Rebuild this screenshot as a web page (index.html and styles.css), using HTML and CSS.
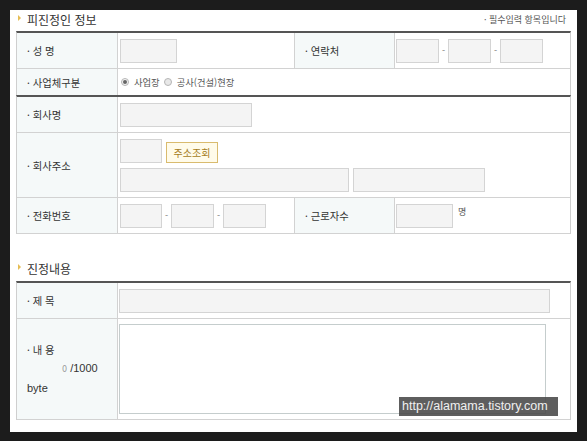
FILE: index.html
```html
<!DOCTYPE html>
<html lang="ko">
<head>
<meta charset="utf-8">
<title>피진정인 정보</title>
<link rel="stylesheet" href="styles.css">
</head>
<body>
<div class="frame">
  <div class="sec-head">
    <h2 class="sec-title">피진정인 정보</h2>
    <span class="note">· 필수입력 항목입니다</span>
  </div>
  <div class="tbl">
    <div class="row cols4 h36">
      <div class="th">· 성 명</div>
      <div class="td"><span class="inp w57"></span></div>
      <div class="th">· 연락처</div>
      <div class="td tight"><span class="inp w43"></span><span class="dash">-</span><span class="inp w43"></span><span class="dash">-</span><span class="inp w43"></span></div>
    </div>
    <div class="row cols2 h26 nob">
      <div class="th">· 사업체구분</div>
      <div class="td radios">
        <span class="radio on"></span><span class="rlabel">사업장</span>
        <span class="radio"></span><span class="rlabel">공사(건설)현장</span>
      </div>
    </div>
  </div>
  <div class="tbl">
    <div class="row cols2 h36">
      <div class="th">· 회사명</div>
      <div class="td"><span class="inp w132"></span></div>
    </div>
    <div class="row cols2 h65">
      <div class="th">· 회사주소</div>
      <div class="td stack">
        <div class="line bottom"><span class="inp w42"></span><span class="btn">주소조회</span></div>
        <div class="line"><span class="inp w229"></span><span class="inp w132"></span></div>
      </div>
    </div>
    <div class="row cols4 h36">
      <div class="th">· 전화번호</div>
      <div class="td"><span class="inp w42"></span><span class="dash">-</span><span class="inp w43"></span><span class="dash">-</span><span class="inp w43"></span></div>
      <div class="th">· 근로자수</div>
      <div class="td tight"><span class="inp w57"></span><span class="unit">명</span></div>
    </div>
  </div>

  <div class="sec-head second">
    <h2 class="sec-title">진정내용</h2>
  </div>
  <div class="tbl">
    <div class="row cols2 h36">
      <div class="th">· 제 목</div>
      <div class="td tight"><span class="inp w431"></span></div>
    </div>
    <div class="row cols2 h101">
      <div class="th multi">
        <span>· 내 용</span>
        <span class="count"><span class="zero">0</span> /1000</span>
        <span class="byte">byte</span>
      </div>
      <div class="td tight"><span class="area"></span></div>
    </div>
  </div>

  <div class="watermark">http://alamama.tistory.com</div>
</div>
</body>
</html>
```
FILE: styles.css
```css
* { box-sizing: border-box; margin: 0; padding: 0; }
html, body { background: #1c1c1c; }
body {
  margin: 0;
  width: 587px;
  height: 441px;
  overflow: hidden;
  font-family: "Noto Sans CJK KR", "Noto Sans", sans-serif;
  color: #333;
}
.frame {
  position: relative;
  margin: 10px 0 0 10px;
  width: 567px;
  height: 422px;
  background: #fff;
  padding: 0 6px;
}
.sec-head {
  height: 21px;
  display: flex;
  align-items: center;
  justify-content: space-between;
  padding: 0 5px 2px 2px;
}
.sec-head.second {
  margin-top: 26px;
  padding-bottom: 4px;
}
.sec-title {
  font-size: 12px;
  font-weight: normal;
  color: #333;
  display: flex;
  align-items: center;
}
.sec-title::before {
  content: "";
  width: 0;
  height: 0;
  border-top: 3px solid transparent;
  border-bottom: 3px solid transparent;
  border-left: 3px solid #e6bd55;
  margin-right: 6px;
  margin-top: -3px;
}
.note {
  font-size: 9px;
  color: #555;
}
.tbl {
  border-top: 2px solid #555;
  border-left: 1px solid #cfcfcf;
  border-right: 1px solid #cfcfcf;
  width: 555px;
}
.row {
  display: grid;
  border-bottom: 1px solid #d2d2d2;
}
.row.nob { border-bottom: none; }
.cols2 { grid-template-columns: 101px auto; }
.cols4 { grid-template-columns: 101px 177px 100px auto; }
.h26 { height: 26px; }
.h36 { height: 36px; }
.h65 { height: 65px; }
.h101 { height: 101px; }
.th {
  background: #f5f9f9;
  border-right: 1px solid #d2d2d2;
  font-size: 10.3px;
  color: #333;
  padding-left: 10px;
  display: flex;
  align-items: center;
}
.th.multi {
  flex-direction: column;
  align-items: flex-start;
  justify-content: center;
  line-height: 19px;
  padding-bottom: 1px;
}
.count {
  font-family: "Liberation Sans", Arial, sans-serif;
  font-size: 11px;
  padding-left: 35px;
}
.zero {
  font-family: "DejaVu Sans", sans-serif;
  font-size: 8px;
  color: #999;
}
.byte {
  font-family: "Liberation Sans", Arial, sans-serif;
  font-size: 11px;
}
.td {
  display: flex;
  align-items: center;
  padding-left: 2px;
  border-right: 1px solid #d2d2d2;
}
.td:last-child { border-right: none; }
.td.tight { padding-left: 1px; }
.inp {
  display: block;
  height: 24px;
  background: #f4f4f4;
  border: 1px solid #d4d4d4;
}
.w42 { width: 42px; }
.w43 { width: 43px; }
.w57 { width: 57px; }
.w132 { width: 132px; }
.w229 { width: 229px; }
.w431 { width: 431px; }
.dash {
  width: 9px;
  text-align: center;
  font-size: 9px;
  color: #777;
}
.unit {
  font-size: 9px;
  color: #555;
  margin-left: 5px;
  margin-top: -8px;
}
.stack {
  flex-direction: column;
  align-items: flex-start;
  justify-content: center;
  gap: 5px;
}
.line {
  display: flex;
  gap: 4px;
}
.line.bottom { align-items: flex-end; }
.btn {
  display: flex;
  align-items: center;
  justify-content: center;
  width: 52px;
  height: 21px;
  border: 1px solid #d9bb6e;
  background: #fffbea;
  color: #a57d1c;
  font-size: 10px;
}
.radios { padding-left: 3px; }
.radio {
  width: 8px;
  height: 8px;
  border-radius: 50%;
  border: 1px solid #b5b5b5;
  background: #e8e8e8;
  position: relative;
  margin-right: 5px;
}
.radio.on { background: #f4f4f4; }
.radio.on::after {
  content: "";
  position: absolute;
  left: 1px;
  top: 1px;
  width: 4px;
  height: 4px;
  border-radius: 50%;
  background: #666;
}
.rlabel {
  font-size: 9.3px;
  color: #555;
  margin-right: 4px;
}
.area {
  display: block;
  width: 427px;
  height: 90px;
  background: #fff;
  border: 1px solid #c5cdcd;
}
.watermark {
  position: absolute;
  left: 389px;
  top: 387px;
  width: 159px;
  height: 19px;
  background: rgba(72, 72, 72, 0.88);
  color: #f0f0f0;
  font-family: "Liberation Sans", Arial, sans-serif;
  font-size: 12.5px;
  line-height: 19px;
  padding-left: 3px;
  white-space: nowrap;
  overflow: hidden;
}
```
